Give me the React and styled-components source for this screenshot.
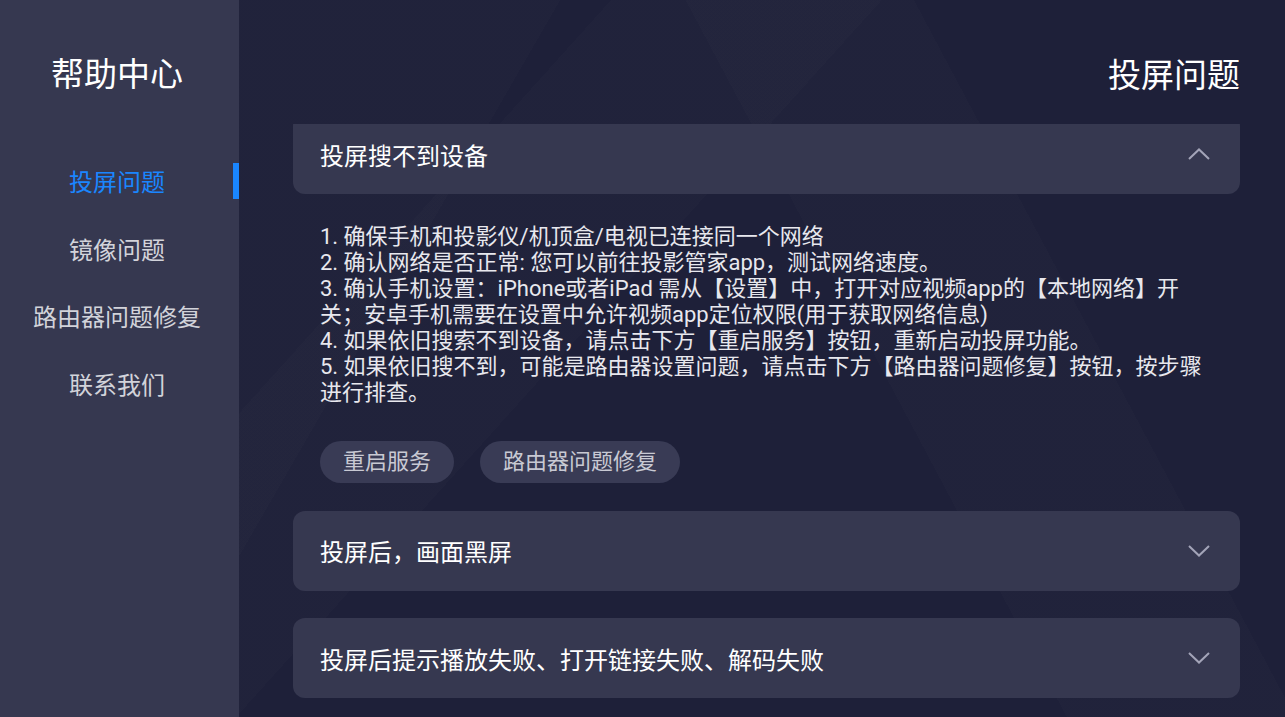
import React from "react";
import styled, { createGlobalStyle } from "styled-components";

const GlobalStyle = createGlobalStyle`
  html, body {
    margin: 0;
    padding: 0;
    background: #1e2039;
  }
  body {
    font-family: Roboto, "Noto Sans CJK SC", sans-serif;
  }
  * {
    box-sizing: border-box;
  }
`;

const Page = styled.div`
  display: flex;
  width: 1285px;
  height: 717px;
  overflow: hidden;
`;

const Sidebar = styled.aside`
  width: 239px;
  flex-shrink: 0;
  background: #363850;
  display: flex;
  flex-direction: column;
  align-items: stretch;
`;

const SideTitle = styled.h1`
  margin: 0;
  height: 147px;
  padding: 54px 5px 0 0;
  text-align: center;
  font-size: 33px;
  font-weight: 400;
  line-height: 42px;
  color: #ffffff;
`;

const NavList = styled.nav`
  display: flex;
  flex-direction: column;
`;

const NavItem = styled.div`
  position: relative;
  height: 67.5px;
  display: flex;
  align-items: center;
  justify-content: center;
  padding-right: 5px;
  font-size: 24px;
  color: ${(p) => (p.$active ? "#1a86ff" : "#d2d3da")};

  &::after {
    content: "";
    display: ${(p) => (p.$active ? "block" : "none")};
    position: absolute;
    right: 0;
    top: 16px;
    width: 6px;
    height: 36px;
    background: #1a86ff;
  }
`;

const Main = styled.main`
  flex: 1;
  display: flex;
  flex-direction: column;
  padding: 0 45px 0 54px;
  background-color: #1e2039;
  background-image:
    linear-gradient(62deg, transparent 58%, rgba(255, 255, 255, 0.012) 58%, rgba(255, 255, 255, 0.012) 74%, transparent 74%),
    linear-gradient(-48deg, transparent 62%, rgba(255, 255, 255, 0.01) 62%, rgba(255, 255, 255, 0.01) 78%, transparent 78%),
    linear-gradient(120deg, rgba(255, 255, 255, 0.01) 0%, rgba(255, 255, 255, 0.01) 22%, transparent 22%);
`;

const PageTitle = styled.h2`
  margin: 0;
  height: 124px;
  padding-top: 55px;
  text-align: right;
  font-size: 33px;
  font-weight: 400;
  line-height: 42px;
  color: #ffffff;
`;

const Scroller = styled.div`
  flex: 1;
  overflow: hidden;
`;

const List = styled.div`
  display: flex;
  flex-direction: column;
  gap: 27.5px;
  margin-top: -10px;
`;

const Panel = styled.section`
  display: flex;
  flex-direction: column;
`;

const Header = styled.div`
  height: 80px;
  display: flex;
  align-items: center;
  justify-content: space-between;
  padding: 0 30px 0 27px;
  background: #363850;
  border-radius: 12px;
  font-size: 24px;
  color: #ffffff;
`;

const Body = styled.div`
  padding: 30px 27px 0 27px;
`;

const Steps = styled.div`
  font-size: 22px;
  line-height: 26px;
  color: #e8e8ee;
`;

const Actions = styled.div`
  display: flex;
  gap: 26px;
  margin-top: 35px;
`;

const Pill = styled.button`
  height: 42px;
  padding: 0 23px;
  border: none;
  border-radius: 21px;
  background: #393b55;
  color: #c8c9d3;
  font-family: inherit;
  font-size: 22px;
  line-height: 42px;
`;

const Chevron = ({ up }) => (
  <svg width="22" height="12" viewBox="0 0 22 12" fill="none">
    <polyline
      points={up ? "1,11 11,1.5 21,11" : "1,1 11,10.5 21,1"}
      stroke="#a3a4b8"
      strokeWidth="2"
      strokeLinejoin="miter"
    />
  </svg>
);

const navItems = ["投屏问题", "镜像问题", "路由器问题修复", "联系我们"];

const steps = [
  "1. 确保手机和投影仪/机顶盒/电视已连接同一个网络",
  "2. 确认网络是否正常: 您可以前往投影管家app，测试网络速度。",
  "3. 确认手机设置：iPhone或者iPad 需从【设置】中，打开对应视频app的【本地网络】开关；安卓手机需要在设置中允许视频app定位权限(用于获取网络信息)",
  "4. 如果依旧搜索不到设备，请点击下方【重启服务】按钮，重新启动投屏功能。",
  "5. 如果依旧搜不到，可能是路由器设置问题，请点击下方【路由器问题修复】按钮，按步骤进行排查。",
];

export default function App() {
  return (
    <>
      <GlobalStyle />
      <Page>
        <Sidebar>
          <SideTitle>帮助中心</SideTitle>
          <NavList>
            {navItems.map((item, i) => (
              <NavItem key={item} $active={i === 0}>
                {item}
              </NavItem>
            ))}
          </NavList>
        </Sidebar>
        <Main>
          <PageTitle>投屏问题</PageTitle>
          <Scroller>
            <List>
              <Panel>
                <Header>
                  投屏搜不到设备
                  <Chevron up />
                </Header>
                <Body>
                  <Steps>
                    {steps.map((s) => (
                      <div key={s}>{s}</div>
                    ))}
                  </Steps>
                  <Actions>
                    <Pill>重启服务</Pill>
                    <Pill>路由器问题修复</Pill>
                  </Actions>
                </Body>
              </Panel>
              <Panel>
                <Header>
                  投屏后，画面黑屏
                  <Chevron />
                </Header>
              </Panel>
              <Panel>
                <Header>
                  投屏后提示播放失败、打开链接失败、解码失败
                  <Chevron />
                </Header>
              </Panel>
            </List>
          </Scroller>
        </Main>
      </Page>
    </>
  );
}
